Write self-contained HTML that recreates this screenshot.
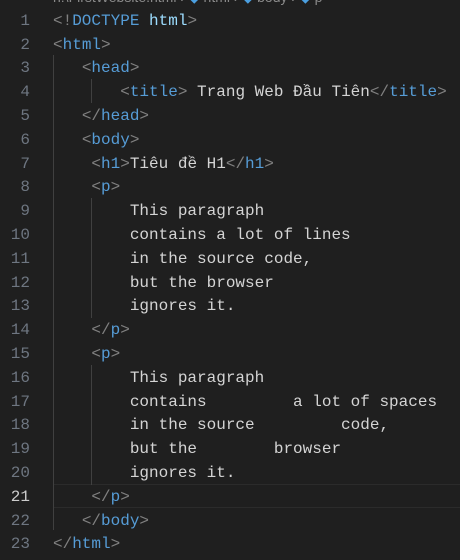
<!DOCTYPE html>
<html><head><style>
body{margin:0;width:460px;height:560px;background:#1f1f1f;overflow:hidden;position:relative;font-family:"Liberation Mono",monospace;font-size:16px}
.bc{position:absolute;top:-11px;left:53px;color:#8a8a8a;font-family:"Liberation Sans",sans-serif;font-size:14px;white-space:pre}
.ln{position:absolute;left:0;width:30px;text-align:right;color:#6e7681}
.c{position:absolute;left:53px;white-space:pre;color:#d4d4d4}
.r{height:23.8px;line-height:23.8px;position:absolute}
.t{color:#569cd6}.b{color:#808080}
.g{position:absolute;width:1px;background:#404040}
.cur{position:absolute;left:53px;right:0;top:484px;height:22px;border-top:1px solid #2b2b2b;border-bottom:1px solid #2b2b2b}
</style></head><body>
<div class="bc">h:\FirstWebsite.html › <span style="color:#4b9fe0">◆</span> html › <span style="color:#4b9fe0">◆</span> body › <span style="color:#4b9fe0">◆</span> p</div>
<div class="cur"></div>
<div class="g" style="left:53px;top:55px;height:475px"></div>
<div class="g" style="left:91px;top:79px;height:24px"></div>
<div class="g" style="left:91px;top:198px;height:120px"></div>
<div class="g" style="left:91px;top:365px;height:120px"></div>
<div id="L"></div>
<script>
var lines=[
'<span class="b">&lt;!</span><span class="t">DOCTYPE</span> <span style="color:#9cdcfe">html</span><span class="b">&gt;</span>',
'<span class="b">&lt;</span><span class="t">html</span><span class="b">&gt;</span>',
'   <span class="b">&lt;</span><span class="t">head</span><span class="b">&gt;</span>',
'       <span class="b">&lt;</span><span class="t">title</span><span class="b">&gt;</span> Trang Web Đầu Tiên<span class="b">&lt;/</span><span class="t">title</span><span class="b">&gt;</span>',
'   <span class="b">&lt;/</span><span class="t">head</span><span class="b">&gt;</span>',
'   <span class="b">&lt;</span><span class="t">body</span><span class="b">&gt;</span>',
'    <span class="b">&lt;</span><span class="t">h1</span><span class="b">&gt;</span>Tiêu đề H1<span class="b">&lt;/</span><span class="t">h1</span><span class="b">&gt;</span>',
'    <span class="b">&lt;</span><span class="t">p</span><span class="b">&gt;</span>',
'        This paragraph',
'        contains a lot of lines',
'        in the source code,',
'        but the browser',
'        ignores it.',
'    <span class="b">&lt;/</span><span class="t">p</span><span class="b">&gt;</span>',
'    <span class="b">&lt;</span><span class="t">p</span><span class="b">&gt;</span>',
'        This paragraph',
'        contains         a lot of spaces',
'        in the source         code,',
'        but the        browser',
'        ignores it.',
'    <span class="b">&lt;/</span><span class="t">p</span><span class="b">&gt;</span>',
'   <span class="b">&lt;/</span><span class="t">body</span><span class="b">&gt;</span>',
'<span class="b">&lt;/</span><span class="t">html</span><span class="b">&gt;</span>'];
var h='';
lines.forEach(function(l,i){var top=(9.8+i*23.8).toFixed(1);
h+='<div class="ln r" style="top:'+top+'px;'+(i==20?'color:#cccccc':'')+'">'+(i+1)+'</div>';
h+='<div class="c r" style="top:'+top+'px">'+l+'</div>';});
document.getElementById('L').innerHTML=h;
</script>
</body></html>
